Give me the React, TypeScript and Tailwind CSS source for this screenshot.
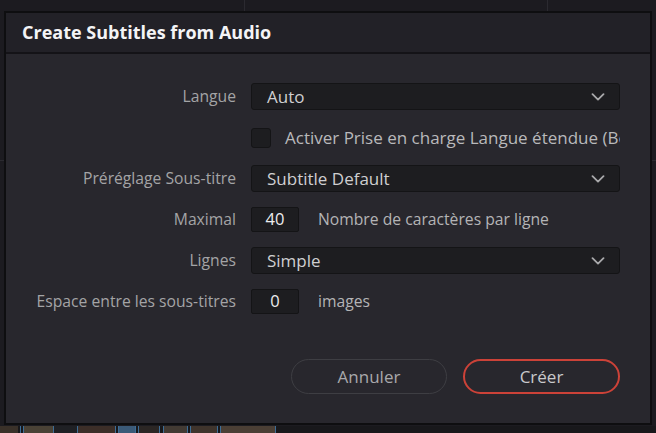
const font = { fontFamily: '"Open Sans", "Liberation Sans", sans-serif' };

// timeline strip under the dialog: [width, colour]
const strip: [number, string][] = [
  [18, "#3a3129"], [2, "#18181b"], [1, "#3e6d96"], [2, "#18181b"], [1, "#3e6d96"],
  [29, "#4a4236"], [1, "#3e6d96"], [23, "#1f2024"], [1, "#3e6d96"],
  [37, "#3c2e28"], [1, "#3e6d96"], [2, "#18181b"], [1, "#3e6d96"],
  [16, "#3b5a78"], [1, "#3e6d96"], [2, "#18181b"], [1, "#3e6d96"],
  [20, "#2b2624"], [1, "#3e6d96"], [3, "#18181b"], [1, "#3e6d96"],
  [23, "#423a33"], [1, "#3e6d96"], [2, "#18181b"], [1, "#3e6d96"],
  [26, "#3f342c"], [1, "#3e6d96"], [2, "#18181b"], [1, "#3e6d96"],
  [54, "#4b3f35"], [1, "#3e6d96"],
];

function Chevron() {
  return (
    <svg width="14" height="8" viewBox="0 0 14 8" fill="none" className="shrink-0">
      <polyline
        points="1.5,1.2 7,6.6 12.5,1.2"
        stroke="#a9a9ab"
        strokeWidth="1.8"
        strokeLinecap="round"
        strokeLinejoin="round"
      />
    </svg>
  );
}

function Label({ children }: { children: string }) {
  return (
    <div className="flex h-[41px] items-center justify-end whitespace-nowrap text-[15.7px] text-[#a4a4a6]">
      {children}
    </div>
  );
}

function Select({ value }: { value: string }) {
  return (
    <div className="flex h-[41px] items-center">
      <div className="flex h-[27px] w-full items-center justify-between rounded-[3px] border border-[#141416] bg-[#1d1d20] pl-[15px] pr-[14px] text-[17px] text-[#cfcfd1]">
        <span>{value}</span>
        <Chevron />
      </div>
    </div>
  );
}

function NumberField({ value, suffix }: { value: string; suffix: string }) {
  return (
    <div className="flex h-[41px] items-center gap-[19px] whitespace-nowrap">
      <div className="flex h-[25px] w-[48px] items-center justify-center rounded-[2px] border border-[#141416] bg-[#1d1d20] text-[16.5px] text-[#ececee]">
        {value}
      </div>
      <span className="text-[15.7px] text-[#b4b4b6]">{suffix}</span>
    </div>
  );
}

export default function App() {
  return (
    <div className="relative h-[433px] w-[656px] overflow-hidden bg-[#1c1b20]" style={font}>
      {/* app behind the dialog */}
      <div className="flex h-full flex-col">
        <div className="flex h-[160px]">
          <div className="w-[245px] border-r border-[#2b2a30]" />
          <div className="w-[303px] border-r border-[#2b2a30]" />
          <div className="flex-1" />
        </div>
        <div className="flex-1 border-t border-[#2b2a30]" />
        <div className="flex h-[7px] bg-[#18181b]">
          {strip.map(([w, c], i) => (
            <div key={i} style={{ width: w, backgroundColor: c }} />
          ))}
        </div>
      </div>

      {/* dialog */}
      <div className="absolute left-[4px] top-[11px] flex h-[414px] w-[648px] flex-col border-2 border-[#0e0e10] bg-[#28272d]">
        <div className="flex h-[41px] shrink-0 items-center border-b-2 border-[#141317] bg-[#222127] pl-[16px] text-[18px] font-bold text-[#f4f4f6]">
          Create Subtitles from Audio
        </div>

        <div className="grid grid-cols-[230px_1fr] gap-x-[15px] pr-[30px] pt-[22px]">
          <Label>Langue</Label>
          <Select value="Auto" />

          <div />
          <div className="flex h-[41px] items-center gap-[14px] overflow-hidden whitespace-nowrap">
            <div className="h-[20px] w-[20px] shrink-0 rounded-[3px] border border-[#141416] bg-[#1d1d20]" />
            <span className="text-[17px] text-[#b9b9bb]">
              Activer Prise en charge Langue étendue (Bêta)
            </span>
          </div>

          <Label>Préréglage Sous-titre</Label>
          <Select value="Subtitle Default" />

          <Label>Maximal</Label>
          <NumberField value="40" suffix="Nombre de caractères par ligne" />

          <Label>Lignes</Label>
          <Select value="Simple" />

          <Label>Espace entre les sous-titres</Label>
          <NumberField value="0" suffix="images" />
        </div>

        <div className="mt-[37px] flex justify-end gap-[16px] pr-[30px]">
          <button className="flex h-[35px] w-[156px] items-center justify-center rounded-full border border-[#3e3e43] text-[17px] text-[#a9a9ab]">
            Annuler
          </button>
          <button className="flex h-[35px] w-[157px] items-center justify-center rounded-full border-2 border-[#cc4238] text-[17px] text-[#c9c9cb]">
            Créer
          </button>
        </div>
      </div>
    </div>
  );
}
